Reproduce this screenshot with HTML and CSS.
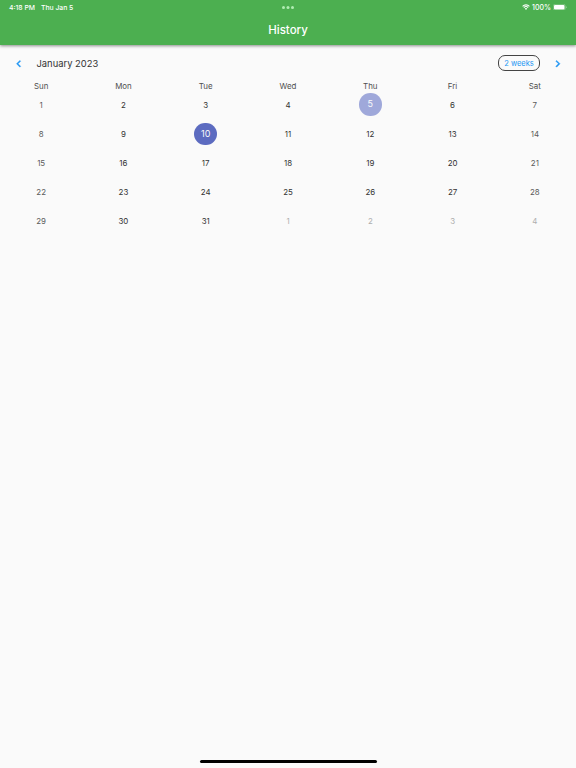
FILE: index.html
```
<!DOCTYPE html>
<html lang="en">
<head>
    <meta charset="UTF-8">
    <meta name="viewport" content="width=device-width, initial-scale=1.0">
    <title>History</title>
    <link rel="stylesheet" href="styles.css">
</head>
<body>
    <header class="app-bar">
        <div class="status-bar">
            <div class="status-left">
                <span class="time">4:18 PM</span>
                <span class="date">Thu Jan 5</span>
            </div>
            <svg class="dots" viewBox="0 0 12 3">
                <circle cx="1.5" cy="1.5" r="1.5"/>
                <circle cx="6" cy="1.5" r="1.5"/>
                <circle cx="10.5" cy="1.5" r="1.5"/>
            </svg>
            <div class="status-right">
                <svg class="wifi" viewBox="0 0 16 12">
                    <path d="M1.2 4.6a9.6 9.6 0 0 1 13.6 0M3.7 7.2a6.1 6.1 0 0 1 8.6 0" fill="none" stroke="#fff" stroke-width="2.2"/>
                    <path d="M8 11.8l-2.5-2.6a3.6 3.6 0 0 1 5 0z" fill="#fff"/>
                </svg>
                <span class="percent">100%</span>
                <svg class="battery" viewBox="0 0 28 13">
                    <rect x="0.5" y="0.5" width="24" height="12" rx="3.5" fill="none" stroke="#fff" stroke-opacity="0.5"/>
                    <rect x="2" y="2" width="21" height="9" rx="2" fill="#fff"/>
                    <path d="M26 4.5c2 .6 2 3.4 0 4z" fill="#fff" fill-opacity="0.5"/>
                </svg>
            </div>
        </div>
        <h1>History</h1>
    </header>

    <main class="calendar">
        <div class="calendar-header">
            <button type="button" class="arrow" aria-label="Previous month">
                <svg viewBox="0 0 24 24"><path d="M15.41 7.41L14 6l-6 6 6 6 1.41-1.41L10.83 12z"/></svg>
            </button>
            <h2>January 2023</h2>
            <button type="button" class="format">2 weeks</button>
            <button type="button" class="arrow" aria-label="Next month">
                <svg viewBox="0 0 24 24"><path d="M10 6L8.59 7.41 13.17 12l-4.58 4.59L10 18l6-6z"/></svg>
            </button>
        </div>
        <div class="weekdays">
            <span>Sun</span><span>Mon</span><span>Tue</span><span>Wed</span><span>Thu</span><span>Fri</span><span>Sat</span>
        </div>
        <div class="days">
            <span class="weekend">1</span><span>2</span><span>3</span><span>4</span><span class="today"><b>5</b></span><span>6</span><span class="weekend">7</span>
            <span class="weekend">8</span><span>9</span><span class="selected"><b>10</b></span><span>11</span><span>12</span><span>13</span><span class="weekend">14</span>
            <span class="weekend">15</span><span>16</span><span>17</span><span>18</span><span>19</span><span>20</span><span class="weekend">21</span>
            <span class="weekend">22</span><span>23</span><span>24</span><span>25</span><span>26</span><span>27</span><span class="weekend">28</span>
            <span class="weekend">29</span><span>30</span><span>31</span><span class="outside">1</span><span class="outside">2</span><span class="outside">3</span><span class="outside">4</span>
        </div>
    </main>

    <div class="home-indicator"></div>
</body>
</html>
```
FILE: styles.css
```
* {
    box-sizing: border-box;
}
body {
    display: flex;
    flex-direction: column;
    height: 100vh;
    margin: 0;
    font-family: Inter, "Liberation Sans", sans-serif;
    background-color: #fafafa;
}
h1, h2 {
    margin: 0;
    font-weight: 500;
}
.app-bar {
    height: 45px;
    background-color: #4caf50; /* Material green */
    color: #fff;
    box-shadow: 0 1px 3px rgba(0, 0, 0, 0.45);
}
.app-bar h1 {
    font-size: 11.5px;
    line-height: 32px;
    text-align: center;
}
.status-bar {
    display: grid;
    grid-template-columns: 1fr auto 1fr;
    align-items: center;
    height: 14px;
    padding: 0 9px;
    font-size: 6.8px;
    font-weight: 500;
}
.status-left {
    display: flex;
    gap: 6px;
}
.status-right {
    display: flex;
    align-items: center;
    justify-content: flex-end;
}
.dots {
    width: 12px;
    height: 3px;
    fill: #b0ecb2;
}
.wifi {
    width: 8px;
    height: 6px;
    margin-right: 2px;
}
.percent {
    margin-right: 2px;
    font-size: 7px;
}
.battery {
    width: 14px;
    height: 6.5px;
}

/* Calendar */
.calendar {
    flex: 1;
    color: #4a4a4a;
}
.calendar-header {
    display: flex;
    align-items: center;
    height: 36.5px;
    padding: 0 11.5px;
}
.calendar-header h2 {
    flex: 1;
    margin-left: 11.5px;
    font-size: 9.4px;
    font-weight: 400;
    color: #333;
}
.arrow {
    width: 13.5px;
    height: 13.5px;
    padding: 0;
    border: none;
    background: none;
}
.arrow svg {
    display: block;
    width: 100%;
    height: 100%;
    fill: #2196f3;
    stroke: #2196f3;
    stroke-width: 0.8;
}
.format {
    width: 42px;
    height: 16px;
    margin-right: 11px;
    padding: 0;
    border: 1px solid #444;
    border-radius: 7px;
    background: none;
    font-family: inherit;
    font-size: 7.5px;
    color: #2196f3;
}
.weekdays, .days {
    display: grid;
    grid-template-columns: repeat(7, 1fr);
    text-align: center;
    font-size: 7.9px;
}
.weekdays {
    height: 8.5px;
    line-height: 8.5px;
    color: #4f4f4f;
}
.days {
    grid-auto-rows: 29.2px;
}
.days span {
    display: flex;
    align-items: center;
    justify-content: center;
    color: #333;
}
.days .weekend {
    color: #5a5a5a;
}
.days .outside {
    color: #aeaeae;
}
.days b {
    width: 22.5px;
    height: 22.5px;
    border-radius: 50%;
    font-size: 9px;
    font-weight: 400;
    line-height: 22.5px;
    color: #fafafa;
}
.today b {
    background-color: #9fa8da;
}
.selected b {
    background-color: #5c6bc0;
}

.home-indicator {
    width: 177px;
    height: 3px;
    margin: 0 auto 5px;
    border-radius: 2px;
    background-color: #000;
}
```
